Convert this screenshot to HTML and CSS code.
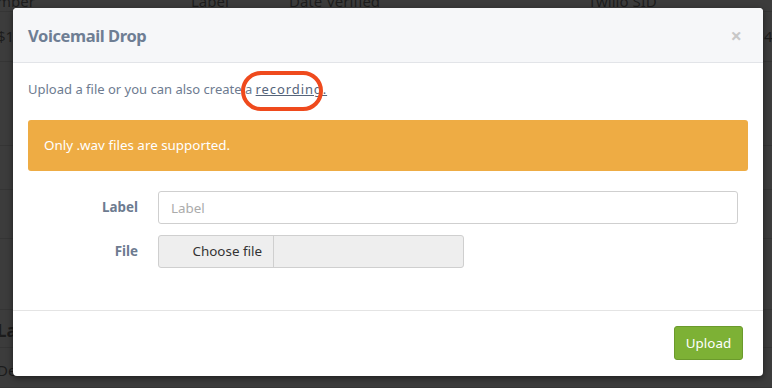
FILE: index.html
```html
<!DOCTYPE html>
<html lang="en">
<head>
  <meta charset="UTF-8" />
  <title>Voicemail Drop</title>
  <link rel="stylesheet" href="styles.css">
</head>
<body>

  <!-- page behind the modal -->
  <div class="backdrop-page">
    <div class="bg-row bg-head">
      <span class="c1">mber</span>
      <span class="c2">Label</span>
      <span class="c3">Date Verified</span>
      <span class="c4">Twilio SID</span>
    </div>
    <div class="bg-row r1"><span class="c1">$10</span><span class="right">4</span></div>
    <div class="bg-row r2"></div>
    <div class="bg-row r3"></div>
    <div class="bg-row r4"></div>
    <div class="bg-row r5"></div>
    <div class="bg-row bg-section"><span class="c1">La</span></div>
    <div class="bg-row r6"><span class="c1">De</span></div>
  </div>

  <div class="modal">
    <div class="modal-header">
      <h4>Voicemail Drop</h4>
      <span class="close">&times;</span>
    </div>

    <div class="modal-body">
      <p class="intro">Upload a file or you can also create a <a href="#" class="circled">recording.</a></p>

      <div class="alert">Only .wav files are supported.</div>

      <div class="form-row">
        <label>Label</label>
        <input type="text" class="text-input" placeholder="Label">
      </div>
      <div class="form-row">
        <label>File</label>
        <div class="file-input">
          <span class="file-btn">Choose file</span>
          <span class="file-name"></span>
        </div>
      </div>
    </div>

    <div class="modal-footer">
      <button class="btn-upload">Upload</button>
    </div>
  </div>

</body>
</html>
```

FILE: styles.css
```css
body {
  margin: 0;
  background-color: #3c3c3c;
  font-family: "Noto Sans", "Open Sans", sans-serif;
  font-size: 13.4px;
  overflow: hidden;
  height: 388px;
}
.backdrop-page {
  color: #1c1c1c;
  font-size: 15px;
}
.bg-row {
  position: relative;
  box-sizing: border-box;
  border-bottom: 1px solid #353535;
}
.bg-row span {
  position: absolute;
}
.bg-head { height: 12px; }
.bg-head span { top: -9px; }
.r1 { height: 50px; }
.r2 { height: 84px; }
.r3 { height: 44px; }
.r4 { height: 49px; }
.r5 { height: 71px; }
.r6 { height: 40px; }
.bg-row .c1 { left: -3px; top: 14px; }
.bg-head .c1 { top: -9px; }
.bg-row .c2 { left: 191px; }
.bg-row .c3 { left: 289px; }
.bg-row .c4 { left: 588px; }
.bg-row .right { left: 764px; top: 14px; }
.bg-section {
  height: 38px;
  font-weight: bold;
}
.bg-section .c1 { top: 9px; font-size: 17px; }
.r6 .c1 { top: 12px; }

.modal {
  position: absolute;
  left: 13px;
  top: 8px;
  width: 750px;
  background: #fff;
  border-radius: 4px;
  box-shadow: 0 2px 6px rgba(0,0,0,0.5);
  overflow: hidden;
}
.modal-header {
  display: flex;
  align-items: center;
  justify-content: space-between;
  height: 54px;
  padding: 0 15px;
  background: #f6f7f9;
  border-bottom: 1px solid #e2e4e8;
}
.modal-header h4 {
  margin: 0;
  font-size: 16.5px;
  letter-spacing: -0.4px;
  font-weight: bold;
  color: #6e7e94;
}
.close {
  font-size: 20px;
  font-weight: bold;
  color: #c8c8c8;
  margin-right: 6px;
}
.modal-body {
  padding: 11px 15px 31px;
}
.intro {
  margin: 0 0 15px;
  color: #6d7b90;
  font-size: 13px;
  line-height: 31px;
}
.circled {
  color: #55647a;
  text-decoration: underline;
  letter-spacing: 0.9px;
  position: relative;
}
.circled::after {
  content: "";
  position: absolute;
  left: -15px;
  top: -9px;
  width: 82px;
  height: 40px;
  box-sizing: border-box;
  border: 4px solid #ef4a1d;
  border-radius: 20px;
}
.alert {
  background: #eeac44;
  color: #fff;
  border-radius: 3px;
  height: 51px;
  line-height: 51px;
  padding: 0 16px;
  margin-bottom: 20px;
}
.form-row {
  display: flex;
  align-items: center;
  margin-bottom: 11px;
}
.form-row label {
  width: 110px;
  text-align: right;
  padding-right: 20px;
  font-weight: bold;
  color: #6d7b90;
  align-self: flex-start;
  padding-top: 7px;
}
.text-input {
  width: 580px;
  height: 33px;
  box-sizing: border-box;
  border: 1px solid #cfcfcf;
  border-radius: 3px;
  padding: 0 12px;
  font-family: inherit;
  font-size: 13.4px;
}
.text-input::placeholder {
  color: #ababab;
}
.file-input {
  display: flex;
  width: 306px;
  height: 33px;
  box-sizing: border-box;
  border: 1px solid #cfcfcf;
  border-radius: 3px;
  background: #eeeeee;
}
.file-btn {
  width: 115px;
  box-sizing: border-box;
  border-right: 1px solid #cfcfcf;
  text-align: right;
  padding-right: 11px;
  line-height: 31px;
  color: #333;
}
.modal-footer {
  display: flex;
  justify-content: flex-end;
  border-top: 1px solid #e4e4e4;
  padding: 15px 20px 16px;
}
.btn-upload {
  background: #7db135;
  border: 1px solid #6b9a2c;
  border-radius: 3px;
  color: #fff;
  font-family: inherit;
  font-size: 13.4px;
  width: 69px;
  height: 34px;
}
```
